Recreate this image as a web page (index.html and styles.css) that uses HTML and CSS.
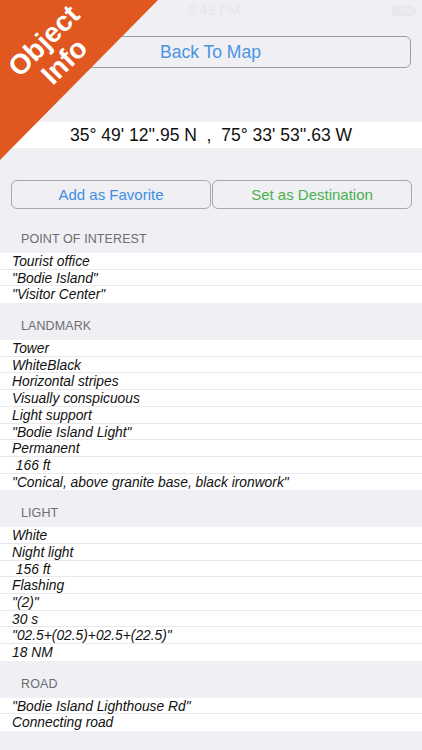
FILE: index.html
```html
<!DOCTYPE html>
<html>
<head>
<meta charset="utf-8">
<link rel="stylesheet" href="styles.css">
</head>
<body>
<div class="screen">
  <div class="status">
    <span class="time">3:43 PM</span>
    <span class="battery"><span class="batt-body"></span><span class="batt-tip"></span></span>
  </div>
  <div class="back-wrap"><div class="btn back">Back To Map</div></div>
  <div class="coords">35° 49' 12''.95 N  ,  75° 33' 53''.63 W</div>
  <div class="actions">
    <div class="btn fav">Add as Favorite</div>
    <div class="btn dest">Set as Destination</div>
  </div>

  <div class="header first">POINT OF INTEREST</div>
  <div class="rows">
    <div class="row">Tourist office</div>
    <div class="row">"Bodie Island"</div>
    <div class="row">"Visitor Center"</div>
  </div>

  <div class="header">LANDMARK</div>
  <div class="rows">
    <div class="row">Tower</div>
    <div class="row">WhiteBlack</div>
    <div class="row">Horizontal stripes</div>
    <div class="row">Visually conspicuous</div>
    <div class="row">Light support</div>
    <div class="row">"Bodie Island Light"</div>
    <div class="row">Permanent</div>
    <div class="row"> 166 ft</div>
    <div class="row">"Conical, above granite base, black ironwork"</div>
  </div>

  <div class="header">LIGHT</div>
  <div class="rows">
    <div class="row">White</div>
    <div class="row">Night light</div>
    <div class="row"> 156 ft</div>
    <div class="row">Flashing</div>
    <div class="row">"(2)"</div>
    <div class="row">30 s</div>
    <div class="row">"02.5+(02.5)+02.5+(22.5)"</div>
    <div class="row">18 NM</div>
  </div>

  <div class="header">ROAD</div>
  <div class="rows">
    <div class="row">"Bodie Island Lighthouse Rd"</div>
    <div class="row">Connecting road</div>
  </div>

  <div class="banner">
    <div class="banner-text">Object<br>Info</div>
  </div>
</div>
</body>
</html>
```
FILE: styles.css
```css
html, body {
  margin: 0;
  padding: 0;
  background: #efeff4;
}
.screen {
  position: relative;
  width: 422px;
  height: 750px;
  overflow: hidden;
  font-family: "Liberation Sans", Arial, sans-serif;
  background: #efeff4;
}
.status {
  height: 20px;
  display: flex;
  align-items: center;
  justify-content: center;
  position: relative;
}
.time {
  font-size: 14px;
  color: #e6e6ec;
  margin-left: 6px;
}
.battery {
  position: absolute;
  right: 6px;
  top: 6px;
  display: flex;
  align-items: center;
}
.batt-body {
  width: 20px;
  height: 8px;
  border: 1px solid #e4e4ea;
  border-radius: 2px;
  background: #e9e9ef;
}
.batt-tip {
  width: 2px;
  height: 4px;
  background: #e4e4ea;
}
.back-wrap {
  padding: 16px 11px 0 10px;
}
.btn {
  box-sizing: border-box;
  border: 1px solid #9c9ca0;
  border-radius: 6px;
  display: flex;
  align-items: center;
  justify-content: center;
}
.back {
  height: 32px;
  font-size: 17.5px;
  color: #4a94e4;
}
.coords {
  margin-top: 54px;
  height: 26px;
  line-height: 26px;
  background: #fff;
  text-align: center;
  font-size: 17.5px;
  color: #111;
  white-space: pre;
}
.actions {
  margin-top: 32px;
  margin-bottom: 7px;
  display: flex;
  gap: 1px;
  padding: 0 10px 0 11px;
}
.actions .btn {
  flex: 1;
  height: 29px;
  font-size: 15px;
  border-color: #a8a8ac;
}
.fav { color: #3e8ee2; }
.dest { color: #4caf50; }
.header {
  box-sizing: border-box;
  height: 37px;
  padding: 0 0 7px 21px;
  display: flex;
  align-items: flex-end;
  font-size: 12.5px;
  letter-spacing: 0.1px;
  color: #6d6d72;
}
.rows {
  background: #fff;
}
.row {
  box-sizing: border-box;
  height: 16.7px;
  line-height: 18px;
  padding-left: 12px;
  font-size: 13.8px;
  font-style: italic;
  color: #111;
  white-space: pre;
  border-bottom: 1px solid #e9e9ec;
}
.row:last-child {
  border-bottom: none;
}
.banner {
  position: absolute;
  left: 0;
  top: 0;
  width: 160px;
  height: 160px;
  background: #e0581f;
  clip-path: polygon(0 0, 158px 0, 0 160px);
}
.banner-text {
  position: absolute;
  left: 54px;
  top: 51px;
  width: 120px;
  transform: translate(-50%, -50%) rotate(-45deg);
  text-align: center;
  color: #fff;
  font-weight: bold;
  font-size: 28px;
  line-height: 29px;
}
```
